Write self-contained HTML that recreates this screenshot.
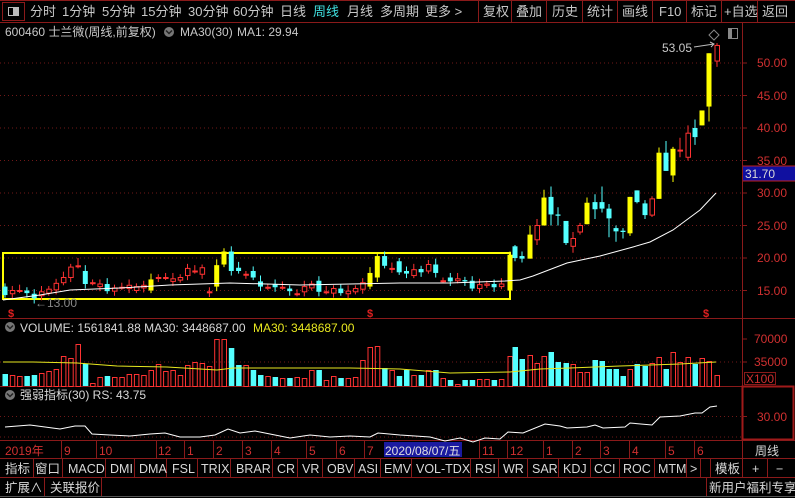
<!DOCTYPE html>
<html><head><meta charset="utf-8"><style>
*{margin:0;padding:0;box-sizing:border-box}
body{width:795px;height:498px;background:#000;overflow:hidden;position:relative;font-family:"Liberation Sans","Noto Sans CJK SC",sans-serif;font-size:12px;color:#c8c8c8}
.a{position:absolute;white-space:nowrap;line-height:1}
svg{position:absolute;left:0;top:0}
</style></head><body>
<svg id="s" width="795" height="498" viewBox="0 0 795 498" font-family="Liberation Sans, Noto Sans CJK SC, sans-serif">
<!-- top bar -->
<rect x="0" y="0" width="795" height="22" fill="#000"/>
<line x1="0" y1="0.5" x2="795" y2="0.5" stroke="#8a1a1a"/>
<line x1="0" y1="22.5" x2="795" y2="22.5" stroke="#8a1a1a"/>
<rect x="2.5" y="2.5" width="22" height="18" fill="none" stroke="#8a1a1a"/>
<rect x="8.5" y="7.5" width="10" height="8" fill="none" stroke="#bbb"/>
<rect x="13" y="8" width="5" height="7" fill="#bbb"/>
<g stroke="#8a1a1a">
<line x1="478.5" y1="0" x2="478.5" y2="22"/><line x1="511.5" y1="0" x2="511.5" y2="22"/>
<line x1="546.5" y1="0" x2="546.5" y2="22"/><line x1="582.5" y1="0" x2="582.5" y2="22"/>
<line x1="617.5" y1="0" x2="617.5" y2="22"/><line x1="652.5" y1="0" x2="652.5" y2="22"/>
<line x1="686.5" y1="0" x2="686.5" y2="22"/><line x1="721.5" y1="0" x2="721.5" y2="22"/>
<line x1="757.5" y1="0" x2="757.5" y2="22"/>
</g>
<g font-size="13" fill="#c8c8c8">
<text x="30" y="16">分时</text><text x="62" y="16">1分钟</text><text x="102" y="16">5分钟</text>
<text x="141" y="16">15分钟</text><text x="188" y="16">30分钟</text><text x="233" y="16">60分钟</text>
<text x="280" y="16">日线</text><text x="313" y="16" fill="#40e0e0">周线</text><text x="347" y="16">月线</text>
<text x="380" y="16">多周期</text><text x="425" y="16">更多 &gt;</text>
<text x="483" y="16">复权</text><text x="516" y="16">叠加</text><text x="552" y="16">历史</text>
<text x="587" y="16">统计</text><text x="622" y="16">画线</text><text x="659" y="16">F10</text>
<text x="691" y="16">标记</text><text x="724" y="16">+自选</text><text x="762" y="16">返回</text>
</g>
<!-- header line 2 -->
<g font-size="12" fill="#c8c8c8">
<text x="5" y="36">600460 士兰微(周线,前复权)</text>
<circle cx="169" cy="32" r="5" fill="#777"/><path d="M166 30.5l3 3 3-3" stroke="#222" stroke-width="1.5" fill="none"/>
<text x="180" y="36">MA30(30)</text><text x="237" y="36">MA1: 29.94</text>
</g>
<path d="M714 30l5 5-5 5-5-5z" fill="none" stroke="#888"/>
<rect x="728.5" y="28.5" width="9" height="10" fill="none" stroke="#888"/><rect x="729" y="29" width="3" height="9" fill="#888"/>
<!-- frame lines -->
<line x1="742.5" y1="23" x2="742.5" y2="458" stroke="#8a1a1a"/>
<line x1="0" y1="318.5" x2="795" y2="318.5" stroke="#8a1a1a"/>
<line x1="0" y1="386.5" x2="742" y2="386.5" stroke="#8a1a1a"/>
<rect x="742.5" y="386.5" width="51" height="53" fill="none" stroke="#a01a1a" stroke-width="2"/>
<line x1="0" y1="440.5" x2="795" y2="440.5" stroke="#8a1a1a"/>
<!-- grids -->
<g stroke="#701818" stroke-dasharray="1,3">
<line x1="0" y1="63" x2="742" y2="63"/><line x1="0" y1="95.5" x2="742" y2="95.5"/>
<line x1="0" y1="128" x2="742" y2="128"/><line x1="0" y1="160.5" x2="742" y2="160.5"/>
<line x1="0" y1="193" x2="742" y2="193"/><line x1="0" y1="225.5" x2="742" y2="225.5"/>
<line x1="0" y1="258" x2="742" y2="258"/><line x1="0" y1="290.5" x2="742" y2="290.5"/>
<line x1="0" y1="362" x2="742" y2="362"/>
<line x1="0" y1="416.5" x2="742" y2="416.5"/><line x1="0" y1="437" x2="742" y2="437"/>
</g>
<!-- right axis -->
<g stroke="#8a1a1a">
<line x1="742" y1="63" x2="747" y2="63"/><line x1="742" y1="95.5" x2="747" y2="95.5"/>
<line x1="742" y1="128" x2="747" y2="128"/><line x1="742" y1="160.5" x2="747" y2="160.5"/>
<line x1="742" y1="193" x2="747" y2="193"/><line x1="742" y1="225.5" x2="747" y2="225.5"/>
<line x1="742" y1="258" x2="747" y2="258"/><line x1="742" y1="290.5" x2="747" y2="290.5"/>
<line x1="742" y1="339" x2="747" y2="339"/><line x1="742" y1="362" x2="747" y2="362"/>
<line x1="742" y1="416.5" x2="747" y2="416.5"/>
</g>
<g font-size="12" fill="#d03030">
<text x="757" y="67">50.00</text><text x="757" y="100">45.00</text><text x="757" y="132">40.00</text>
<text x="757" y="165">35.00</text><text x="757" y="197">30.00</text><text x="757" y="230">25.00</text>
<text x="757" y="262">20.00</text><text x="757" y="295">15.00</text>
<text x="754" y="343">70000</text><text x="754" y="366">35000</text>
<text x="757" y="421">30.00</text>
</g>
<rect x="744.5" y="372.5" width="31" height="12" fill="none" stroke="#8a1a1a"/>
<text x="746" y="383" font-size="12" fill="#d03030">X100</text>
<rect x="743" y="166" width="52" height="15" fill="#1010a0"/>
<line x1="743" y1="166" x2="795" y2="166" stroke="#c02020"/><line x1="743" y1="181" x2="795" y2="181" stroke="#c02020"/>
<text x="745" y="178" font-size="12" fill="#d8d8d8">31.70</text>
<!-- yellow box -->
<rect x="3" y="253" width="507" height="46" fill="none" stroke="#ffff00" stroke-width="2"/>
<g id="cd"></g>
<!-- MA30 main -->
<polyline fill="none" stroke="#fff" stroke-width="1" points="3,300 40,295 70,290 120,288 170,285 230,283 300,285 350,284 400,283 450,283 505,281 520,280 533,276 567,263 600,256 633,247 650,242 673,230 700,210 716,193"/>
<!-- volume MA -->
<polyline fill="none" stroke="#e8e820" stroke-width="1" points="3,362 33,362 77,363 117,366 167,367 217,370 233,368 283,368 350,368 400,369 450,373 510,372 540,369 570,368 620,366 680,364 716,362"/>
<!-- RS line -->
<polyline fill="none" stroke="#fff" stroke-width="1" points="5,427 30,425 60,429 75,426 85,426 92,434 110,435 130,436 150,434 165,433 180,437 200,437 215,435 228,429 240,433 255,431 270,434 290,438 310,435 330,437 350,436 370,437 378,433 400,435 430,437 445,441 460,438 473,442 485,438 500,439 508,432 523,433 545,424 560,426 567,428 587,427 595,425 603,428 625,427 630,423 652,425 660,417 680,416 695,413 702,413 710,407 717,406"/>
<!-- labels -->
<text x="662" y="52" font-size="12" fill="#c8c8c8">53.05</text>
<path d="M694 47l20-3m-4-2l4 2-3 3" stroke="#bbb" fill="none"/>
<text x="35" y="307" font-size="12" fill="#888">←13.00</text>
<g font-size="11" font-weight="bold" fill="#e02020"><text x="8" y="317">$</text><text x="367" y="317">$</text><text x="703" y="317">$</text></g>
<g font-size="12">
<circle cx="10" cy="327" r="5" fill="#777"/><path d="M7 325.5l3 3 3-3" stroke="#222" stroke-width="1.5" fill="none"/>
<text x="20" y="332" fill="#d8d8d8">VOLUME: 1561841.88  MA30: 3448687.00</text>
<text x="253" y="332" fill="#e8e820">MA30: 3448687.00</text>
<circle cx="10" cy="395" r="5" fill="#777"/><path d="M7 393.5l3 3 3-3" stroke="#222" stroke-width="1.5" fill="none"/>
<text x="20" y="399" fill="#d8d8d8">强弱指标(30)  RS: 43.75</text>
</g>
<!-- time axis -->
<g stroke="#8a1a1a">
<line x1="0" y1="458.5" x2="795" y2="458.5"/><line x1="0" y1="477.5" x2="795" y2="477.5"/>
<line x1="61.5" y1="441" x2="61.5" y2="458"/><line x1="96.5" y1="441" x2="96.5" y2="458"/>
<line x1="156.5" y1="441" x2="156.5" y2="458"/><line x1="184.5" y1="441" x2="184.5" y2="458"/>
<line x1="213.5" y1="441" x2="213.5" y2="458"/><line x1="242.5" y1="441" x2="242.5" y2="458"/>
<line x1="271.5" y1="441" x2="271.5" y2="458"/><line x1="306.5" y1="441" x2="306.5" y2="458"/>
<line x1="336.5" y1="441" x2="336.5" y2="458"/><line x1="364.5" y1="441" x2="364.5" y2="458"/>
<line x1="479.5" y1="441" x2="479.5" y2="458"/><line x1="507.5" y1="441" x2="507.5" y2="458"/>
<line x1="543.5" y1="441" x2="543.5" y2="458"/><line x1="572.5" y1="441" x2="572.5" y2="458"/>
<line x1="600.5" y1="441" x2="600.5" y2="458"/><line x1="629.5" y1="441" x2="629.5" y2="458"/>
<line x1="665.5" y1="441" x2="665.5" y2="458"/><line x1="694.5" y1="441" x2="694.5" y2="458"/>
<line x1="742.5" y1="458" x2="742.5" y2="477"/>
</g>
<g font-size="12" fill="#d03030">
<text x="5" y="455">2019年</text><text x="64" y="455">9</text><text x="99" y="455">10</text>
<text x="158" y="455">12</text><text x="187" y="455">1</text><text x="216" y="455">2</text>
<text x="245" y="455">3</text><text x="274" y="455">4</text><text x="309" y="455">5</text>
<text x="339" y="455">6</text><text x="367" y="455">7</text>
<text x="482" y="455">11</text><text x="510" y="455">12</text><text x="546" y="455">1</text>
<text x="575" y="455">2</text><text x="603" y="455">3</text><text x="632" y="455">4</text>
<text x="668" y="455">5</text><text x="697" y="455">6</text>
</g>
<rect x="384" y="442" width="78" height="15" fill="#1a1aa0"/>
<text x="385" y="455" font-size="12" fill="#e0e0e0">2020/08/07/五</text>
<text x="755" y="455" font-size="12" fill="#d8d8d8">周线</text>
<!-- indicator row -->
<g stroke="#8a1a1a">
<line x1="0" y1="496.5" x2="795" y2="496.5" stroke="#555"/>
<line x1="33.5" y1="459" x2="33.5" y2="477"/><line x1="62.5" y1="459" x2="62.5" y2="477"/>
<line x1="105.5" y1="459" x2="105.5" y2="477"/><line x1="134.5" y1="459" x2="134.5" y2="477"/>
<line x1="166.5" y1="459" x2="166.5" y2="477"/><line x1="197.5" y1="459" x2="197.5" y2="477"/>
<line x1="230.5" y1="459" x2="230.5" y2="477"/><line x1="272.5" y1="459" x2="272.5" y2="477"/>
<line x1="297.5" y1="459" x2="297.5" y2="477"/><line x1="322.5" y1="459" x2="322.5" y2="477"/>
<line x1="354.5" y1="459" x2="354.5" y2="477"/><line x1="380.5" y1="459" x2="380.5" y2="477"/>
<line x1="411.5" y1="459" x2="411.5" y2="477"/><line x1="470.5" y1="459" x2="470.5" y2="477"/>
<line x1="498.5" y1="459" x2="498.5" y2="477"/><line x1="527.5" y1="459" x2="527.5" y2="477"/>
<line x1="558.5" y1="459" x2="558.5" y2="477"/><line x1="590.5" y1="459" x2="590.5" y2="477"/>
<line x1="619.5" y1="459" x2="619.5" y2="477"/><line x1="654.5" y1="459" x2="654.5" y2="477"/>
<line x1="686.5" y1="459" x2="686.5" y2="477"/><line x1="700.5" y1="459" x2="700.5" y2="477"/>
<line x1="710.5" y1="459" x2="710.5" y2="477"/><line x1="767.5" y1="459" x2="767.5" y2="477"/>
<line x1="44.5" y1="478" x2="44.5" y2="496"/><line x1="101.5" y1="478" x2="101.5" y2="496"/>
<line x1="706.5" y1="478" x2="706.5" y2="496"/>
</g>
<g font-size="12.5" fill="#d8d8d8">
<text x="5" y="473">指标</text><text x="35" y="473">窗口</text><text x="68" y="473">MACD</text>
<text x="110" y="473">DMI</text><text x="139" y="473">DMA</text><text x="172" y="473">FSL</text>
<text x="201" y="473">TRIX</text><text x="236" y="473">BRAR</text><text x="277" y="473">CR</text>
<text x="302" y="473">VR</text><text x="327" y="473">OBV</text><text x="358" y="473">ASI</text>
<text x="384" y="473">EMV</text><text x="416" y="473">VOL-TDX</text><text x="475" y="473">RSI</text>
<text x="503" y="473">WR</text><text x="532" y="473">SAR</text><text x="563" y="473">KDJ</text>
<text x="594" y="473">CCI</text><text x="623" y="473">ROC</text><text x="658" y="473">MTM</text>
<text x="690" y="473">&gt;</text><text x="715" y="473">模板</text><text x="752" y="473">+</text><text x="776" y="473">−</text>
<text x="5" y="492">扩展∧</text><text x="50" y="492">关联报价</text><text x="709" y="492">新用户福利专享</text>
</g>
</svg>
<script>
var Y=function(p){return 63+(50-p)*6.5};
var L=[[15.6,14.3],[14.5,15.0],[15,15],[15,14.6],[14.5,13.8],[14.2,14.8],[14.6,15.2],[15.1,16.1],[16.2,17.0],[17.0,18.6],[18.8,18.8],[18.0,16.0],[16.2,16.2],[15.6,16.0],[16.0,14.9],[14.9,15.4],[15.5,15.5],[15.3,15.8],[15.0,15.6],[15.4,15.8],[15.0,16.7,'y'],[17.0,17.0],[17.0,17.0],[16.4,16.8],[16.6,17.0],[17.3,18.4],[18.0,18.0],[17.5,18.5],[14.8,14.8],[15.6,18.9,'y'],[19.0,21.0,'y'],[21.0,18.0],[18.5,18.0],[17.5,17.5],[18.0,17.0],[16.4,15.6],[15.5,15.5],[16.0,15.5],[15.5,15.5],[15.3,14.9],[14.5,14.5],[14.8,15.6],[15.4,16.0],[16.5,14.8],[14.8,14.8],[14.6,15.3],[15.3,14.6],[14.5,14.9],[14.8,15.3],[15.2,16.2],[15.6,17.7,'y'],[17.0,20.3,'y'],[20.3,18.8],[18.4,18.4],[19.5,17.8],[18.0,17.6],[17.3,18.2],[18.3,17.8],[18.0,19.0],[19.0,17.7],[16.5,16.5],[17.0,16.4],[16.5,16.8],[16.6,16.4],[16.5,15.3],[15.3,15.9],[15.8,16.0],[16.0,15.5],[15.6,16.0]];
var LV=[12,11,10,10,11,13,15,17,30,28,42,22,3,9,10,9,9,12,12,11,16,22,15,16,11,21,24,23,20,47,47,38,21,21,16,11,10,9,8,8,9,8,16,16,6,10,8,8,9,26,39,40,18,16,10,16,11,11,16,16,8,6,2,6,6,7,7,6,7];
var R=[[510,15,20.5,21,15,'y',30],[515,21.8,20,22,19.5,0,39],[522,20.3,19.9,21,19.3,0,27],[530,19.9,23.6,25,19.9,'y',31],[537,22.8,25,26,22,0,23],[544,25,29.3,30.5,25,'y',30],[551,29.4,26.7,31,25,0,34],[558,26.7,26.5,27.8,25,0,24],[566,25.7,22.3,25.7,22,0,23],[573,21.8,23,24,20.8,0,22],[580,24,25,25.4,23.6,0,14],[587,25.2,28.5,29.3,25.2,'y',14],[595,28.6,27.5,29.8,26,0,26],[602,28.6,27.6,31,27,0,25],[609,27.6,26.1,28.3,23.2,0,17],[616,24.6,24.1,25,22.5,0,17],[623,24.2,24.0,24.6,23,0,10],[630,23.8,29.4,29.4,23.4,'y',17],[637,30.4,28.6,30.4,28.4,0,22],[645,28.4,26.6,28.9,26,0,20],[652,26.6,29.1,29.5,26.3,0,23],[659,29.1,36.2,37,29.1,'y',29],[666,36.2,33.4,38,33.4,0,17],[673,32.7,36.8,37.1,31.7,'y',34],[680,36.6,36.6,38.5,35.5,0,24],[688,35.5,39.2,40.4,35,0,29],[695,40,38.6,41.3,37.4,0,22],[702,40.4,42.7,42.7,40.4,'y',28],[709,43.3,51.5,51.5,41,'y',25],[717,50.3,52.7,53.05,49.4,0,11]];
var C=[];
L.forEach(function(d,i){var o=d[0],c=d[1];C.push([5+7.3*i,o,c,Math.max(o,c)+0.5+(i%3)*0.2,Math.min(o,c)-0.4-(i%2)*0.3,d[2],LV[i]]);});
C[4][4]=13.0;C[10][3]=20.0;C[31][3]=21.8;C[28][4]=14.0;
R.forEach(function(d){C.push(d)});
var s='';
C.forEach(function(d){var x=d[0],o=d[1],c=d[2],h=d[3],l=d[4],t=d[5],v=d[6];
var up=c>=o,col=t=='y'?'#ffff00':(up?'#ff3232':'#54ffff');
var top=Y(Math.max(o,c)),bh=Math.max(1,Y(Math.min(o,c))-top);
s+='<line x1="'+x+'" y1="'+Y(h)+'" x2="'+x+'" y2="'+Y(l)+'" stroke="'+col+'"/>';
if(t=='y'||!up)s+='<rect x="'+(x-2.5)+'" y="'+top+'" width="5" height="'+bh+'" fill="'+col+'"/>';
else s+='<rect x="'+(x-2)+'" y="'+top+'" width="4.5" height="'+bh+'" fill="#000" stroke="'+col+'"/>';
var vc=(t=='y'||up)?'#ff3232':'#54ffff';
if(vc=='#54ffff')s+='<rect x="'+(x-2.5)+'" y="'+(386-v)+'" width="5.5" height="'+v+'" fill="'+vc+'"/>';
else s+='<rect x="'+(x-2)+'" y="'+(386.5-v)+'" width="4.5" height="'+v+'" fill="none" stroke="'+vc+'"/>';
});
document.getElementById('cd').innerHTML=s;
</script>
</body></html>
